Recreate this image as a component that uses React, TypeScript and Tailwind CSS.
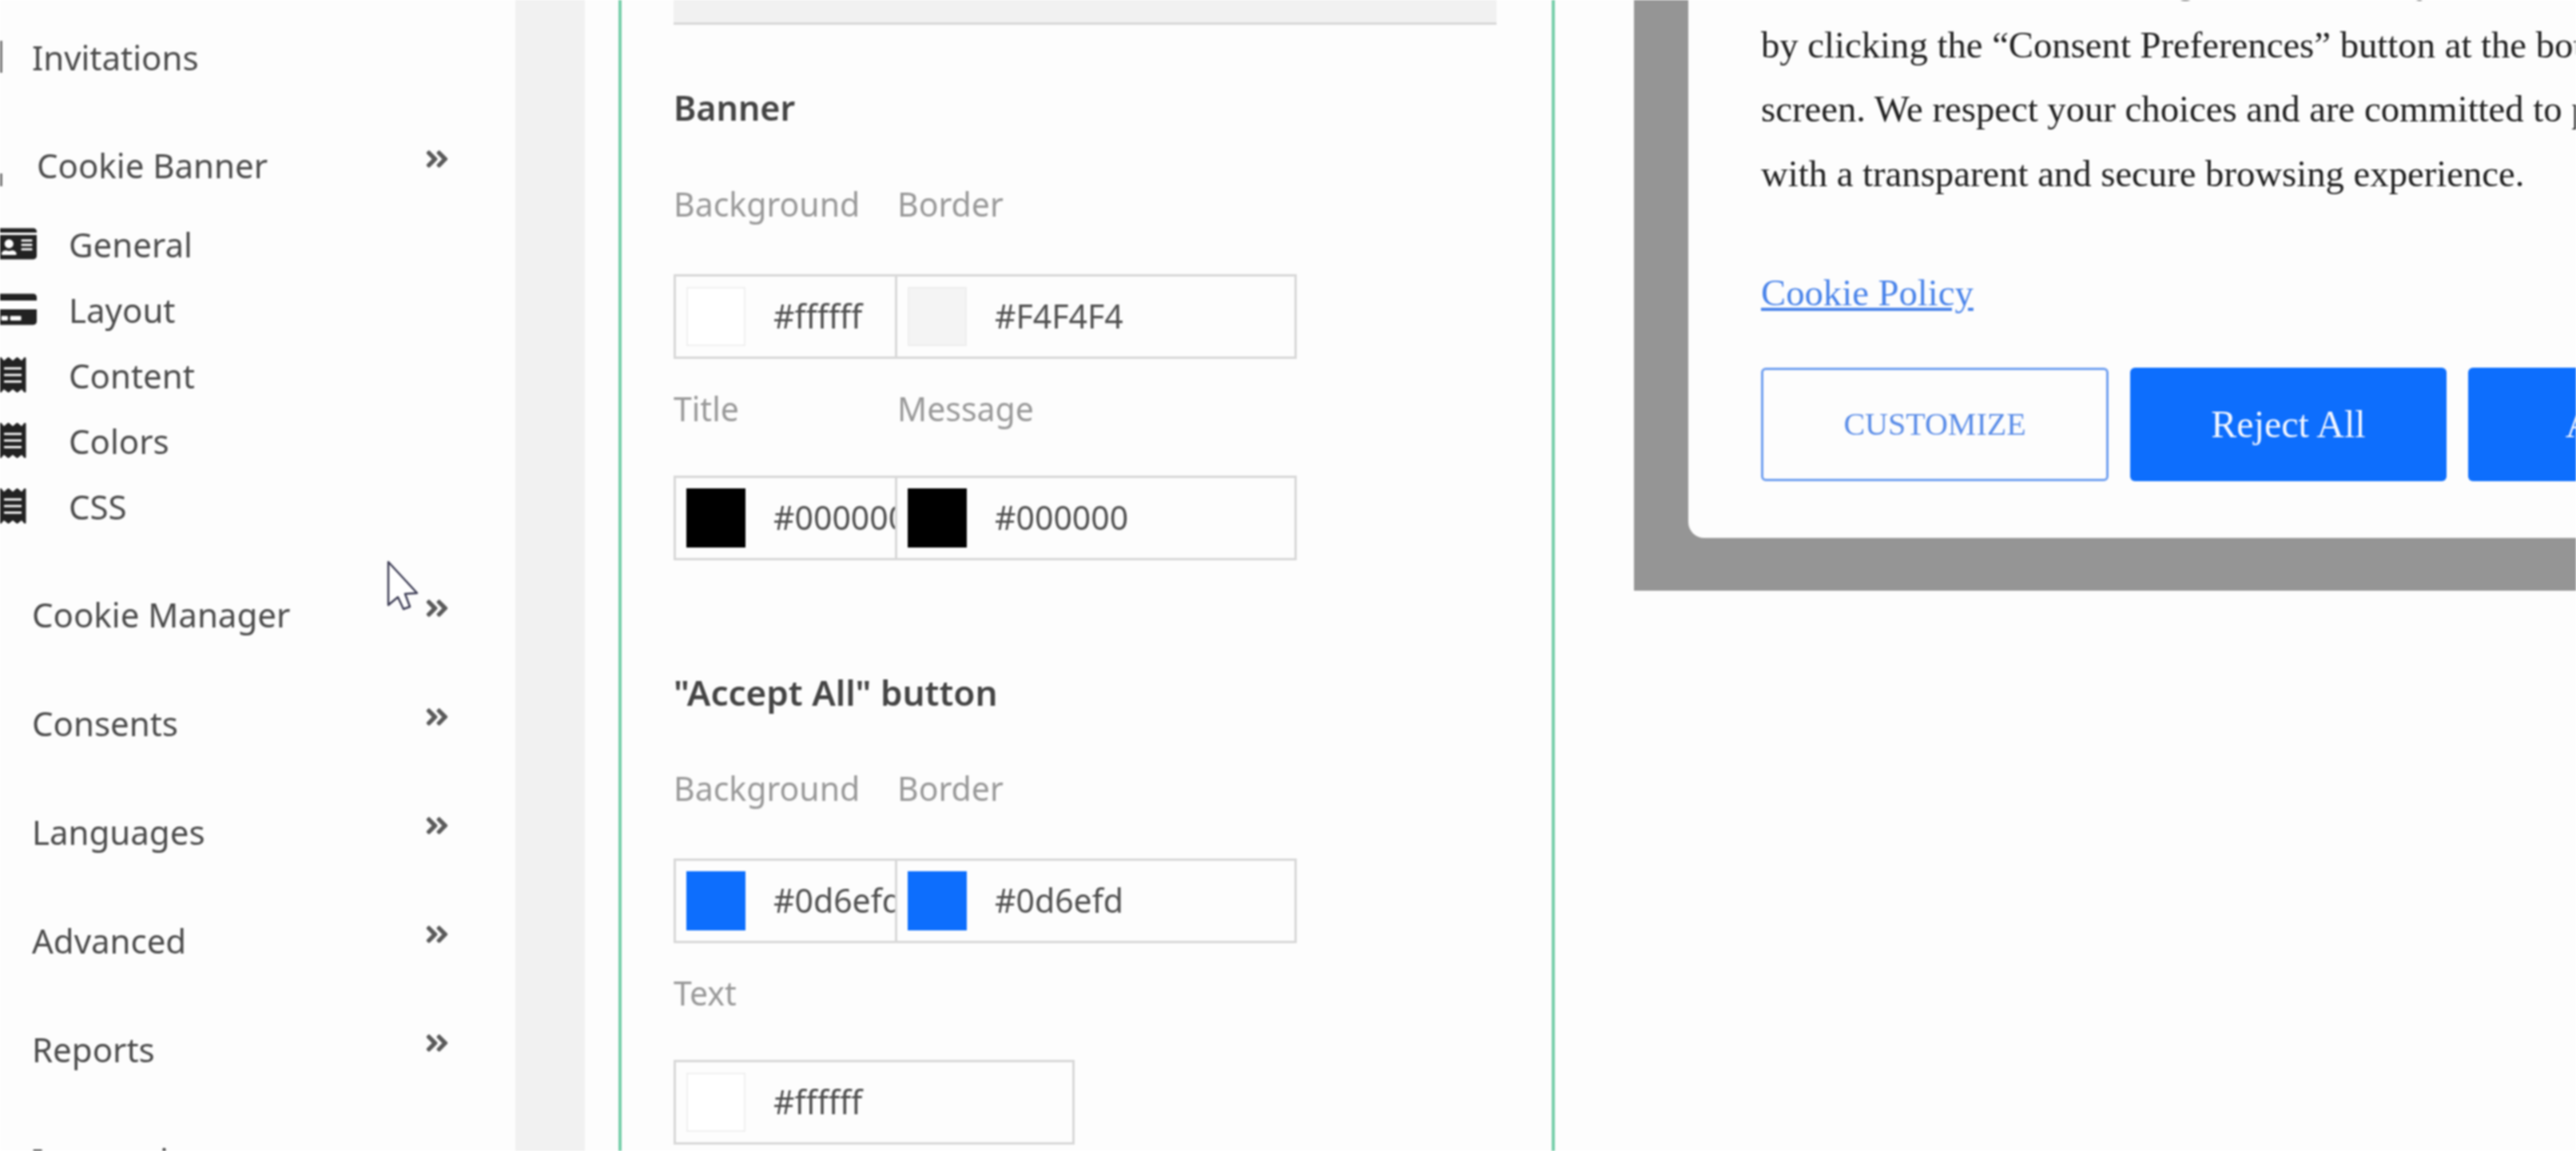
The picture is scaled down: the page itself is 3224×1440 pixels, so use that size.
import { FaAngleDoubleRight, FaCreditCard, FaIdCard, FaReceipt } from "react-icons/fa";

const noto = "font-['Noto_Sans',sans-serif]";

function MainRow({ label, chevron = true, indent = false, sliver = false }: { label: string; chevron?: boolean; indent?: boolean; sliver?: boolean }) {
  return (
    <div className="flex h-[136px] items-center justify-between pr-[81px] text-[42px] text-[#4b4b4b]">
      <div className="flex items-center">
        {sliver ? (
          <span className="h-[40px] w-[3px] bg-[#777]" />
        ) : indent ? (
          <span className="mt-[38px] h-[16px] w-[3px] bg-[#777]" />
        ) : (
          <span className="w-[3px]" />
        )}
        <span className={indent ? "ml-[43px]" : "ml-[37px]"}>{label}</span>
      </div>
      {chevron && <FaAngleDoubleRight className="mb-[14px] text-[34px] text-[#5a5a5a]" />}
    </div>
  );
}

function SubRow({ label, icon }: { label: string; icon: React.ReactNode }) {
  return (
    <div className="flex h-[82px] items-center text-[42px] text-[#4b4b4b]">
      <span className="flex w-[86px] shrink-0 items-center">{icon}</span>
      <span>{label}</span>
    </div>
  );
}

function Swatch({ color }: { color: string }) {
  const edge = color === "#ffffff" ? "border-[#f0f0f0]" : color === "#F4F4F4" ? "border-[#eeeeee]" : "border-transparent";
  return <span className={`h-[74px] w-[74px] shrink-0 border-2 ${edge}`} style={{ backgroundColor: color }} />;
}

function ColorInput({ value, className }: { value: string; className: string }) {
  return (
    <div className={`flex h-[106px] items-center overflow-hidden border-[3px] border-[#d8d8d8] pl-[13px] ${className}`}>
      <Swatch color={value} />
      <span className="ml-[35px] whitespace-nowrap text-[41px] text-[#505050]">{value}</span>
    </div>
  );
}

function Labels({ first, second, high = false }: { first: string; second?: string; high?: boolean }) {
  return (
    <div className={`flex h-[146px] items-center text-[41px] text-[#999999] ${high ? "pb-[29px]" : "pb-[21px]"}`}>
      <span className="w-[280px]">{first}</span>
      {second && <span>{second}</span>}
    </div>
  );
}

function Pair({ first, second }: { first: string; second: string }) {
  return (
    <div className="flex">
      <ColorInput value={first} className="w-[280px]" />
      <ColorInput value={second} className="w-[500px] border-l-0" />
    </div>
  );
}

export default function App() {
  return (
    <div className={`flex h-[1440px] w-[3224px] overflow-hidden bg-[#fdfdfd] blur-[1px] ${noto}`}>
      <aside className="relative w-[645px] shrink-0 pt-[3px]">
        <MainRow label="Invitations" chevron={false} sliver />
        <div className="-mt-[1px]">
          <MainRow label="Cookie Banner" indent />
          <div className="-mt-[10px] mb-[26px]">
            <SubRow label="General" icon={<FaIdCard className="-ml-[4px] text-[50px] text-[#222]" />} />
            <SubRow label="Layout" icon={<FaCreditCard className="-ml-[4px] text-[50px] text-[#222]" />} />
            <SubRow label="Content" icon={<FaReceipt className="-ml-[6px] text-[44px] text-[#222]" />} />
            <SubRow label="Colors" icon={<FaReceipt className="-ml-[6px] text-[44px] text-[#222]" />} />
            <SubRow label="CSS" icon={<FaReceipt className="-ml-[6px] text-[44px] text-[#222]" />} />
          </div>
          <MainRow label="Cookie Manager" />
          <MainRow label="Consents" />
          <MainRow label="Languages" />
          <MainRow label="Advanced" />
          <MainRow label="Reports" />
          <div className="mt-[3px]">
            <MainRow label="Integrations" chevron={false} />
          </div>
        </div>
        <svg className="absolute left-[484px] top-[701px]" width="40" height="64" viewBox="0 0 40 64" fill="#ffffff" stroke="#3d3d55" strokeWidth="2.5" strokeLinejoin="round">
          <path d="M2 2 L2 56 L14 46 L21 61 L29 58 L23 42 L38 41 Z" />
        </svg>
      </aside>

      <div className="w-[87px] shrink-0 bg-[#f1f1f1]" />

      <section className="ml-[42px] w-[1172px] shrink-0 border-x-[4px] border-[#76cea9] px-[65px]">
        <div className="h-[31px] w-[1030px] border-b-[3px] border-[#d8d8d8] bg-[#f1f1f1]" />
        <h3 className="flex h-[166px] items-center pt-[42px] text-[43px] font-semibold text-[#444444]">Banner</h3>
        <Labels first="Background" second="Border" high />
        <Pair first="#ffffff" second="#F4F4F4" />
        <Labels first="Title" second="Message" />
        <Pair first="#000000" second="#000000" />
        <h3 className="flex h-[227px] items-center pt-[103px] text-[44px] font-semibold text-[#444444]">"Accept All" button</h3>
        <Labels first="Background" second="Border" high />
        <Pair first="#0d6efd" second="#0d6efd" />
        <Labels first="Text" />
        <ColorInput value="#ffffff" className="w-[502px]" />
      </section>

      <main className="ml-[99px] h-[739px] min-w-0 flex-1 bg-[#959595] pl-[68px] font-['Liberation_Serif',serif]">
        <div className="flex h-[673px] flex-col justify-end overflow-hidden rounded-bl-[20px] bg-[#fdfdfd] pb-[71px] pl-[91px]">
          <p className="mb-[69px] whitespace-nowrap text-[46.7px] leading-[80.5px] text-[#222222]">
            You can revise or later change consent at any time
            <br />
            by clicking the “Consent Preferences” button at the bottom of your
            <br />
            screen. We respect your choices and are committed to providing you
            <br />
            with a transparent and secure browsing experience.
          </p>
          <a className="mb-[54px] block text-[46.7px] leading-[80px] text-[#4a84ea] underline">Cookie Policy</a>
          <div className="flex gap-[27px]">
            <button className="h-[142px] w-[435px] shrink-0 rounded-[6px] border-[3px] border-[#6f9ff0] bg-[#fdfdfd] text-[40px] text-[#5b8de8]">CUSTOMIZE</button>
            <button className="h-[142px] w-[396px] shrink-0 rounded-[6px] bg-[#0d6efd] text-[48px] text-[#f4f7ff]">Reject All</button>
            <button className="h-[142px] w-[450px] shrink-0 rounded-[6px] bg-[#0d6efd] text-[48px] text-[#f4f7ff]">Accept All</button>
          </div>
        </div>
      </main>
    </div>
  );
}
